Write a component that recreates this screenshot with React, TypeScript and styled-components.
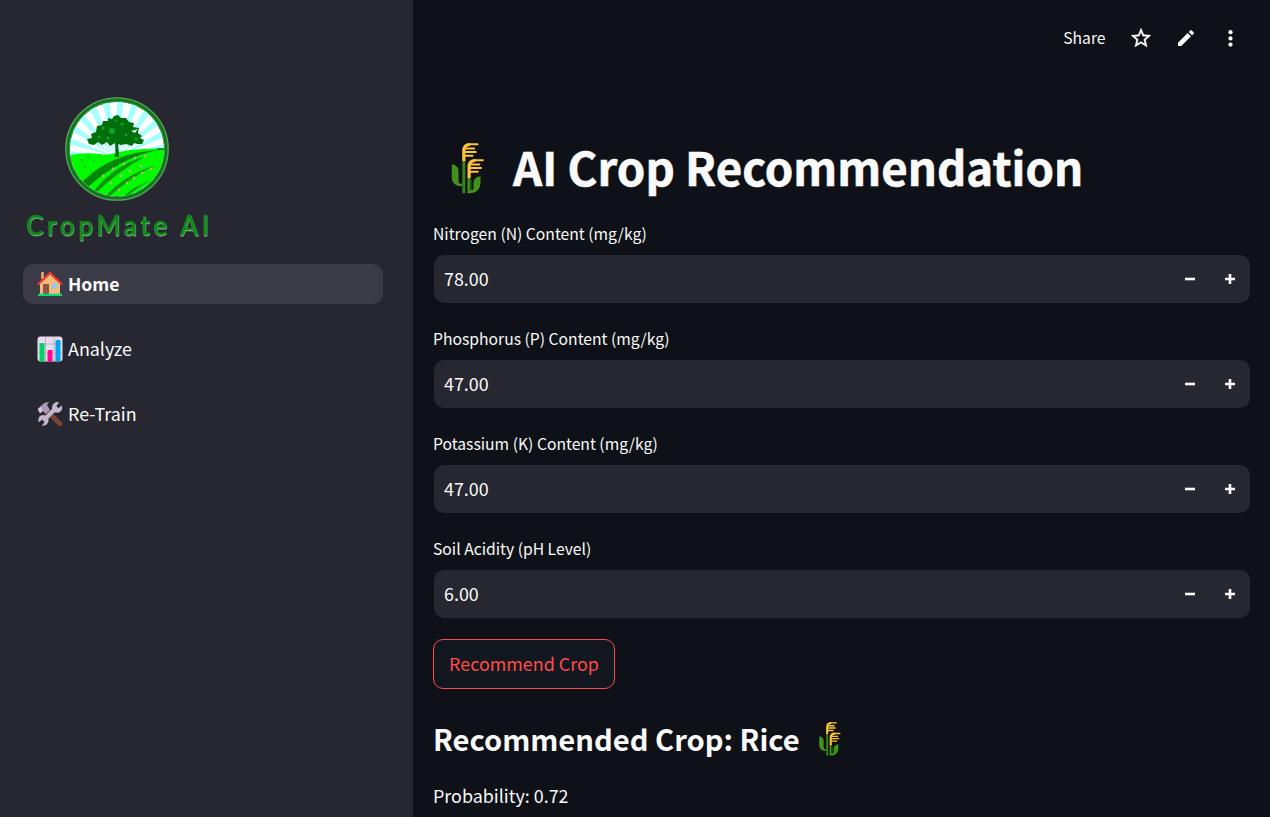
import React from 'react';
import styled, { createGlobalStyle } from 'styled-components';

const GlobalStyle = createGlobalStyle`
  * { box-sizing: border-box; }
  html, body { margin: 0; background: #0e1117; overflow: hidden; }
  body { font-family: "Noto Sans CJK SC", "Noto Sans", sans-serif; color: #fafafa; }
  h1, h2, p { margin: 0; }
  svg { display: block; flex: none; }
`;

const Shell = styled.div`
  display: flex;
  width: 100%;
  height: 817px;
  overflow: hidden;
`;

const Sidebar = styled.aside`
  flex: none;
  width: 413px;
  background: #262730;
  padding: 94px 30px 0 23px;
`;

const Brand = styled.div`
  height: 170px;
`;

const NavItem = styled.a<{ $active?: boolean }>`
  display: flex;
  align-items: center;
  gap: 5px;
  height: 40px;
  margin-bottom: 25px;
  padding: 0 14px;
  border-radius: 10px;
  background: ${(p) => (p.$active ? '#3b3b47' : 'transparent')};
  font-size: ${(p) => (p.$active ? '17.6px' : '17.9px')};
  line-height: ${(p) => (p.$active ? '40px' : '38px')};
  font-weight: ${(p) => (p.$active ? 700 : 400)};
`;

const NavText = styled.span`
  height: 40px;
`;

const Main = styled.main`
  flex: 1;
  min-width: 0;
  padding: 0 20px;
`;

const Toolbar = styled.header`
  display: flex;
  align-items: center;
  justify-content: flex-end;
  height: 76px;
  padding-right: 7px;
  font-size: 15.7px;
`;

const ToolIcon = styled.span`
  display: flex;
  margin-left: 21px;
`;

const ShareLabel = styled.span`
  line-height: 24px;
  margin-right: 2.5px;
`;

const Title = styled.h1`
  display: flex;
  align-items: center;
  height: 66px;
  margin-top: 59px;
  padding-left: 18px;
  gap: 28px;
  font-size: 45.6px;
  line-height: 62px;
  font-weight: 700;
  white-space: nowrap;
  -webkit-text-stroke: 0.6px #fafafa;
`;

const TitleText = styled.span`
  height: 66px;
`;

const Fields = styled.div`
  padding-top: 20px;
`;

const Field = styled.div`
  height: 105px;
`;

const FieldLabel = styled.label`
  display: block;
  height: 34px;
  font-size: 15.7px;
  line-height: 24px;
  padding-top: 1px;
`;

const NumberBox = styled.div`
  display: flex;
  align-items: center;
  height: 48px;
  margin-left: 1px;
  padding: 0 10px;
  border-radius: 10px;
  background: #262730;
  font-size: 17.9px;
  line-height: 46px;
`;

const Value = styled.span`
  flex: 1;
  height: 48px;
`;

const Step = styled.span`
  display: flex;
  justify-content: center;
  width: 20px;
  margin-left: 20px;
`;

const ActionButton = styled.button`
  display: block;
  width: 182px;
  height: 50px;
  margin: -2px 0 0;
  padding: 0 0 2px;
  border: 1px solid #ff4b4b;
  border-radius: 10px;
  background: #131720;
  color: #ff4b4b;
  font-family: inherit;
  font-size: 17.9px;
  line-height: 46px;
`;

const Result = styled.h2`
  display: flex;
  align-items: center;
  height: 44px;
  margin-top: 28px;
  gap: 19px;
  font-size: 29.15px;
  line-height: 42px;
  font-weight: 700;
  white-space: nowrap;
`;

const ResultText = styled.span`
  height: 44px;
`;

const Probability = styled.p`
  margin-top: 19px;
  font-size: 17.9px;
  line-height: 30px;
`;

const rayAngles = Array.from({ length: 24 }, (_, i) => i * 15);
const point = (deg: number, r: number) =>
  `${52 + r * Math.cos((deg * Math.PI) / 180)} ${60 + r * Math.sin((deg * Math.PI) / 180)}`;

const Logo = () => (
  <svg width="200" height="160" viewBox="0 0 200 160">
    <defs>
      <clipPath id="disc"><circle cx="52" cy="52" r="47" /></clipPath>
    </defs>
    <g transform="translate(42 3)">
      <circle cx="52" cy="52" r="51.2" fill="#087d12" stroke="#5f9f68" strokeWidth="1.3" />
      <circle cx="52" cy="52" r="47.5" fill="#fff" stroke="#4b7553" strokeWidth="1" />
      <g clipPath="url(#disc)">
        {rayAngles.map((a) => (
          <path key={a} d={`M52 60L${point(a, 90)}L${point(a + 7, 90)}Z`} fill="#a5ffff" />
        ))}
        <path d="M0 59Q22 54 42 58Q70 50 104 52V104H0Z" fill="#00fb00" />
        <path d="M18 84Q46 56 93 53Q55 61 23 90Z" fill="#008708" />
        <path d="M28 95Q49 68 81 59Q53 74 30 97ZM40 100Q59 78 91 68Q64 81 43 101ZM57 101Q70 88 86 84Q72 90 60 101Z" fill="#07990a" />
        <g fill="#a8b866">
          <circle cx="38" cy="79" r="1.4" /><circle cx="48" cy="72" r="1.4" /><circle cx="59" cy="67" r="1.4" />
          <circle cx="46" cy="86" r="1.4" /><circle cx="56" cy="79" r="1.4" /><circle cx="65" cy="74" r="1.4" />
          <circle cx="70" cy="61" r="1.4" /><circle cx="80" cy="59" r="1.4" /><circle cx="76" cy="69" r="1.4" />
          <circle cx="62" cy="86" r="1.4" /><circle cx="69" cy="81" r="1.4" /><circle cx="77" cy="76" r="1.4" />
          <circle cx="86" cy="72" r="1.4" /><circle cx="54" cy="93" r="1.4" />
        </g>
        <g fill="#20b51a">
          <circle cx="17" cy="63" r="1" /><circle cx="23" cy="60" r="1" /><circle cx="29" cy="64" r="1" />
          <circle cx="20" cy="70" r="1" /><circle cx="35" cy="61" r="1" />
        </g>
      </g>
      <path d="M50 43L50.5 57L49 60H54L53 43Z" fill="#00680c" />
      <path d="M24 47L22 42L27 41L26 37L31 35L32 29L37 28L38 24L43 24L43 21L47 22L49 19L53 18L56 21L61 21L64 25L69 26L68 30L74 31L73 36L77 39L75 41L79 43L77 47L72 47L69 46L67 49L61 47L56 48L50 46L45 49L42 45L37 48L33 45L29 48Z" fill="#006f0b" />
      <g fill="#10a32b">
        <circle cx="38" cy="31" r="1.6" /><circle cx="47" cy="34" r="3" /><circle cx="57" cy="27" r="1.6" />
        <circle cx="34" cy="40" r="1.4" /><circle cx="43" cy="41" r="1.6" /><circle cx="61" cy="38" r="1.4" />
        <circle cx="71" cy="42" r="1.4" /><circle cx="51" cy="24" r="1" />
      </g>
      <path d="M66 34L73 32L70 36Z" fill="#aff8ee" />
      <path d="M92 52H99" stroke="#203e29" strokeWidth="1.3" />
    </g>
    <g fontFamily="Lato, sans-serif" fontSize="26">
      <text x="3.4" y="141.6" textLength="183" fill="#68bd72" stroke="#68ad72" strokeWidth=".8">CropMate AI</text>
      <text x="3" y="141" textLength="183" fill="#0c8a13" stroke="#12861c" strokeWidth=".4">CropMate AI</text>
    </g>
  </svg>
);

const Wheat = ({ width, height }: { width: number; height: number }) => (
  <svg width={width} height={height} viewBox="0 0 33 51">
    <path d="M0.3 21.3C4.5 22 7 24.5 7 28V38C7 40 8 40.8 10.8 40.8V43H8C3 42.5 .3 39 .3 34Z" fill="#43911b" />
    <path d="M10.8 19H13.8V50.3H10.8Z" fill="#38801b" />
    <path d="M16 35H18.8V46.8H22V41C22 36 24.5 33.8 29 33.3V39C29 46 25 50.3 18 50.3H16Z" fill="#43911b" />
    <path d="M18.8 36H20.8V46.8H18.8Z" fill="#174b18" />
    <g id="ears" fill="none" stroke="#ffc338" strokeLinecap="round">
      <path d="M12.3 18.5V8Q12.3 1.5 18.5 1.5" strokeWidth="3.2" strokeLinecap="butt" />
      <path d="M17.5 1.3H26M14 5.6H22.6M14 9H24.3M13.5 12.8H21" strokeWidth="2" />
      <path d="M17.6 35V24Q17.6 17.5 23.8 17.5" strokeWidth="3.2" strokeLinecap="butt" />
      <path d="M22.8 17.3H31.3M19.3 21.6H27.9M19.3 25H29.6M18.8 28.8H26.3" strokeWidth="2" />
    </g>
  </svg>
);

const House = () => (
  <svg width="26" height="26" viewBox="0 0 26 26">
    <path d="M4 2Q4 1 5 1H7V8H4Z" fill="#db9e6f" />
    <path d="M3 12L13 3L23 12V24H3Z" fill="#f2bc78" />
    <path d="M1.5 13L13 2L24.5 13" fill="none" stroke="#f93434" strokeWidth="2.2" strokeLinecap="round" />
    <path d="M6 13H12V23H6Z" fill="#8d5748" />
    <circle cx="10.8" cy="18" r=".6" fill="#512f2c" />
    <path d="M15 12.5H20V17.5H15Z" fill="#83cbff" />
    <path d="M1 22.8H25V25H1Z" fill="#00dd79" />
  </svg>
);

const BarChart = () => (
  <svg width="26" height="26" viewBox="0 0 26 26">
    <rect x=".5" y=".5" width="25" height="25" rx="3" fill="#e6dcee" />
    <path d="M1 8H25M1 17H25M8.5 1V25M17 1V25" stroke="#b8acc3" strokeWidth=".9" />
    <path d="M2.5 25.5V9Q2.5 7 4.5 7H7.5V25.5Z" fill="#00d265" />
    <path d="M10.5 25.5V15Q10.5 14 12 14H15.5V25.5Z" fill="#ff078f" />
    <path d="M18.5 25.5V5Q18.5 4 20 4H22Q23.5 4 23.5 5V25.5Z" fill="#00a6ed" />
  </svg>
);

const Tools = () => (
  <svg width="26" height="26" viewBox="0 0 26 26">
    <path d="M11 11L22.8 22.5" stroke="#7d4533" strokeWidth="4.8" strokeLinecap="round" />
    <path d="M1 8L6 3Q8 1 12 1L10 4L13 9L8.5 13L6 10L3 12Z" fill="#a799b1" />
    <path d="M.7 8L3 12.5L6 9.7L3.8 5.5Z" fill="#d3c6db" />
    <path d="M7.5 18.5L19 7" stroke="#c2b7cb" strokeWidth="4.2" />
    <path d="M15.3 8Q14 3 20 .7L22 1.7L19.3 5L21.5 7.2L24.5 4.5Q26.5 8.5 23 11Q20 12.5 17 11Z" fill="#c2b7cb" />
    <path d="M10.5 15.5Q12.5 18 11.3 21.3Q9 25.3 4.8 24.8L7.5 21.3L5.3 18.5L1.8 21.3Q.3 17 3.8 14.6Q7 13 10.5 15.5Z" fill="#c2b7cb" />
  </svg>
);

const fields = [
  { label: 'Nitrogen (N) Content (mg/kg)', value: '78.00' },
  { label: 'Phosphorus (P) Content (mg/kg)', value: '47.00' },
  { label: 'Potassium (K) Content (mg/kg)', value: '47.00' },
  { label: 'Soil Acidity (pH Level)', value: '6.00' },
];

export default function App() {
  return (
    <Shell>
      <GlobalStyle />
      <Sidebar>
        <Brand><Logo /></Brand>
        <nav>
          <NavItem $active><House /><NavText>Home</NavText></NavItem>
          <NavItem><BarChart /><NavText>Analyze</NavText></NavItem>
          <NavItem><Tools /><NavText>Re-Train</NavText></NavItem>
        </nav>
      </Sidebar>
      <Main>
        <Toolbar>
          <ShareLabel>Share</ShareLabel>
          <ToolIcon>
            <svg width="24" height="24" viewBox="0 0 24 24" fill="#fff" stroke="#fff" strokeWidth=".3">
              <path d="M22 9.24l-7.19-.62L12 2 9.19 8.63 2 9.24l5.46 4.73L5.82 21 12 17.27 18.18 21l-1.63-7.03L22 9.24zM12 15.4l-3.76 2.27 1-4.28-3.32-2.88 4.38-.38L12 6.1l1.71 4.04 4.38.38-3.32 2.88 1 4.28L12 15.4z" />
            </svg>
          </ToolIcon>
          <ToolIcon>
            <svg width="24" height="24" viewBox="0 0 24 24" fill="#fff">
              <path d="M4 16.7V20H7.3L17 10.3L13.7 7ZM14.8 5.9L18.1 9.2L19.6 7.7Q20.3 7 19.6 6.3L17.7 4.4Q17 3.7 16.3 4.4Z" />
            </svg>
          </ToolIcon>
          <ToolIcon>
            <svg width="24" height="24" viewBox="0 0 24 24" fill="#fff">
              <circle cx="11.5" cy="6.2" r="2.1" /><circle cx="11.5" cy="12.4" r="2.1" /><circle cx="11.5" cy="18.6" r="2.1" />
            </svg>
          </ToolIcon>
        </Toolbar>
        <Title><Wheat width={34} height={51} /><TitleText>AI Crop Recommendation</TitleText></Title>
        <Fields>
          {fields.map((f) => (
            <Field key={f.label}>
              <FieldLabel>{f.label}</FieldLabel>
              <NumberBox>
                <Value>{f.value}</Value>
                <Step><svg width="10" height="10" viewBox="0 0 10 10"><path d="M0 5H10" stroke="#fafafa" strokeWidth="2.6" /></svg></Step>
                <Step><svg width="10" height="10" viewBox="0 0 10 10"><path d="M0 5H10M5 0V10" stroke="#fafafa" strokeWidth="2.6" /></svg></Step>
              </NumberBox>
            </Field>
          ))}
        </Fields>
        <ActionButton>Recommend Crop</ActionButton>
        <Result><ResultText>Recommended Crop: Rice</ResultText><Wheat width={22} height={34} /></Result>
        <Probability>Probability: 0.72</Probability>
      </Main>
    </Shell>
  );
}
